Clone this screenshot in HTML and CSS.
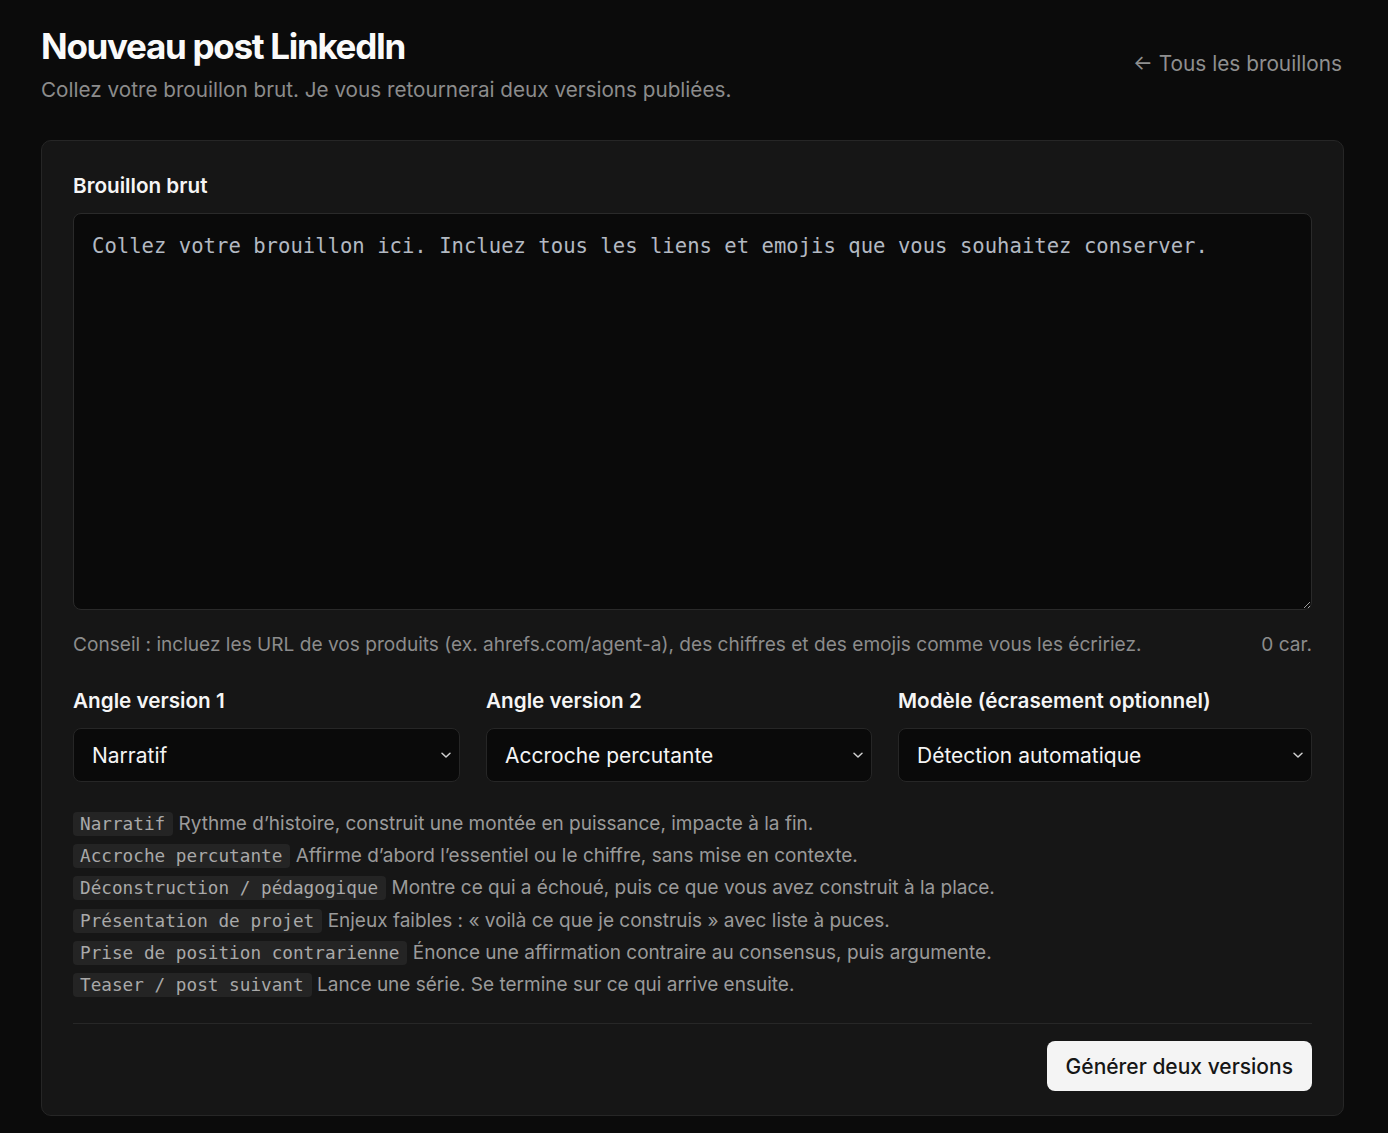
FILE: index.html
```html
<!DOCTYPE html>
<html lang="fr">
<head>
    <meta charset="utf-8">
    <title>Nouveau post LinkedIn</title>
    <link rel="stylesheet" href="styles.css">
</head>
<body>
    <div class="page">
        <header class="head">
            <div>
                <h1 class="title">Nouveau post LinkedIn</h1>
                <p class="sub">Collez votre brouillon brut. Je vous retournerai deux versions publiées.</p>
            </div>
            <a class="back" href="#">← Tous les brouillons</a>
        </header>

        <form class="card">
            <label class="label" for="draft">Brouillon brut</label>
            <textarea id="draft" class="draft" placeholder="Collez votre brouillon ici. Incluez tous les liens et emojis que vous souhaitez conserver."></textarea>
            <div class="hint">
                <span>Conseil : incluez les URL de vos produits (ex. ahrefs.com/agent-a), des chiffres et des emojis comme vous les écririez.</span>
                <span>0 car.</span>
            </div>

            <div class="grid">
                <div class="field">
                    <label class="label">Angle version 1</label>
                    <div class="select">
                        <select><option>Narratif</option></select>
                        <svg viewBox="0 0 12 12" width="12" height="12"><path d="M2 4.2l4 3.8 4-3.8" fill="none" stroke="currentColor" stroke-width="1.5" stroke-linecap="round" stroke-linejoin="round"/></svg>
                    </div>
                </div>
                <div class="field">
                    <label class="label">Angle version 2</label>
                    <div class="select">
                        <select><option>Accroche percutante</option></select>
                        <svg viewBox="0 0 12 12" width="12" height="12"><path d="M2 4.2l4 3.8 4-3.8" fill="none" stroke="currentColor" stroke-width="1.5" stroke-linecap="round" stroke-linejoin="round"/></svg>
                    </div>
                </div>
                <div class="field">
                    <label class="label">Modèle (écrasement optionnel)</label>
                    <div class="select">
                        <select><option>Détection automatique</option></select>
                        <svg viewBox="0 0 12 12" width="12" height="12"><path d="M2 4.2l4 3.8 4-3.8" fill="none" stroke="currentColor" stroke-width="1.5" stroke-linecap="round" stroke-linejoin="round"/></svg>
                    </div>
                </div>
            </div>

            <ul class="angles">
                <li><code>Narratif</code> Rythme d’histoire, construit une montée en puissance, impacte à la fin.</li>
                <li><code>Accroche percutante</code> Affirme d’abord l’essentiel ou le chiffre, sans mise en contexte.</li>
                <li><code>Déconstruction / pédagogique</code> Montre ce qui a échoué, puis ce que vous avez construit à la place.</li>
                <li><code>Présentation de projet</code> Enjeux faibles : « voilà ce que je construis » avec liste à puces.</li>
                <li><code>Prise de position contrarienne</code> Énonce une affirmation contraire au consensus, puis argumente.</li>
                <li><code>Teaser / post suivant</code> Lance une série. Se termine sur ce qui arrive ensuite.</li>
            </ul>

            <div class="actions">
                <button type="button" class="primary">Générer deux versions</button>
            </div>
        </form>
    </div>
</body>
</html>
```

FILE: styles.css
```css
* { margin: 0; padding: 0; box-sizing: border-box; }
body {
    background: #0b0b0b; color: #f2f2f2;
    font-family: Inter, "Liberation Sans", sans-serif;
}
.page { width: 1303px; margin-left: 41px; padding-top: 26px; }
.head { display: flex; justify-content: space-between; align-items: flex-start; }
.title { font-size: 35px; font-weight: 700; letter-spacing: -1.3px; line-height: 40px; color: #fafafa; }
.sub { margin-top: 4px; font-size: 20.7px; line-height: 40px; color: #8c8c8c; }
.back {
    margin-top: 25px; margin-right: 2px; font-size: 20.8px; color: #8f8f8f; text-decoration: none;
}
.card {
    margin-top: 30px; background: #161616; border: 1px solid #262626;
    border-radius: 10px; padding: 30px 31px 24px;
}
.label { display: block; font-size: 20.7px; font-weight: 600; color: #f5f5f5; line-height: 30px; }
.draft {
    display: block; width: 100%; height: 397px; margin-top: 12px;
    background: #0a0a0a; border: 1px solid #2a2a2a; border-radius: 8px;
    padding: 17px 18px; color: #e0e0e0; resize: vertical; outline: none;
    font-family: "DejaVu Sans Mono", monospace; font-size: 20.6px; line-height: 30px;
}
.draft::placeholder { color: #b3b9c2; }
.hint {
    display: flex; justify-content: space-between; margin-top: 20px;
    font-size: 19.1px; color: #8c8c8c; line-height: 28px;
}
.grid { display: grid; grid-template-columns: 387px 386px 1fr; gap: 26px; margin-top: 28px; }
.field .label { margin-bottom: 12px; }
.select { position: relative; }
.select select {
    appearance: none; -webkit-appearance: none; width: 100%; height: 54px;
    background: #0a0a0a; border: 1px solid #262626; border-radius: 8px;
    color: #f5f5f5; font-family: inherit; font-size: 21px; padding: 0 18px; outline: none;
}
.select svg { position: absolute; right: 8px; top: 21px; color: #d0d0d0; pointer-events: none; }
.angles { list-style: none; margin-top: 28px; display: flex; flex-direction: column; gap: 4px; }
.angles li { font-size: 19px; color: #9a9a9a; line-height: 28.2px; }
.angles code {
    font-family: "DejaVu Sans Mono", monospace; font-size: 17.7px;
    background: #242424; color: #a9a9a9; border-radius: 4px; padding: 2px 8px 2px 7px;
}
.actions {
    margin-top: 24px; border-top: 1px solid #272727; padding-top: 17px;
    display: flex; justify-content: flex-end;
}
.primary {
    background: #f4f4f4; color: #161616; border: none; border-radius: 8px;
    font-family: inherit; font-size: 21px; font-weight: 500; height: 50px; padding: 0 19px;
    cursor: pointer;
}
```
